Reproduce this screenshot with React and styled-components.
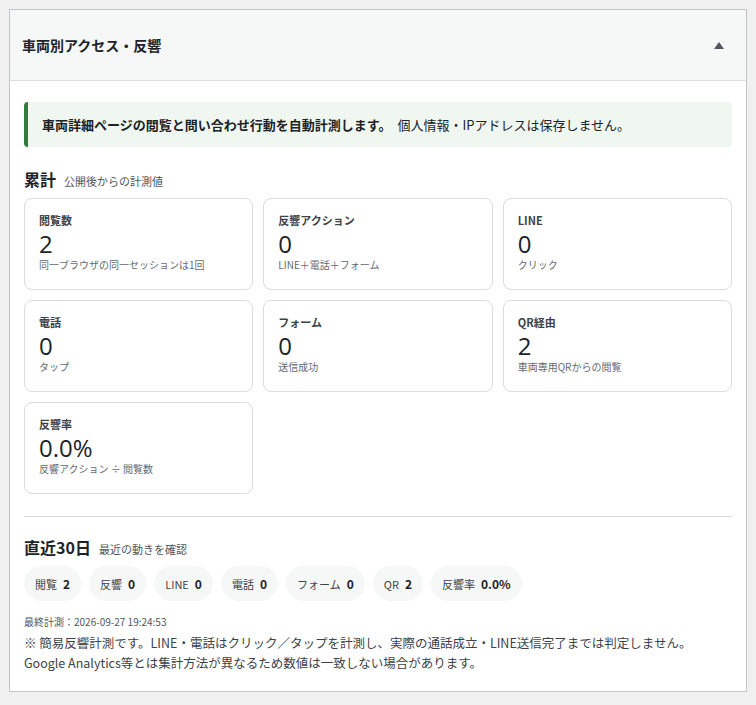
import React from 'react';
import styled, { createGlobalStyle } from 'styled-components';

const Global = createGlobalStyle`
  body {
    margin: 0;
    background: #f0f0f1;
    font-family: "Noto Sans CJK JP", "Noto Sans", sans-serif;
    color: #1d2327;
  }
`;

const Page = styled.div`
  padding: 9px 9px 6px 9px;
`;

const Panel = styled.div`
  background: #fff;
  border: 1px solid #c3c4c7;
`;

const Header = styled.div`
  height: 70px;
  background: #f6f7f7;
  border-bottom: 1px solid #dcdcde;
  display: flex;
  align-items: center;
  justify-content: space-between;
  padding: 0 22px 0 12px;
`;

const Title = styled.h2`
  margin: 0;
  font-size: 14px;
  font-weight: 700;
`;

const Toggle = styled.span`
  width: 0;
  height: 0;
  border-left: 5px solid transparent;
  border-right: 5px solid transparent;
  border-bottom: 7px solid #50575e;
`;

const Body = styled.div`
  padding: 21px 14px 18px 14px;
`;

const Notice = styled.div`
  background: #eff7f0;
  border-left: 4px solid #2f7d3d;
  border-radius: 4px;
  padding: 0 14px;
  height: 45px;
  display: flex;
  align-items: center;
  font-size: 13px;
  strong { font-weight: 700; margin-right: 6px; }
`;

const SectionHead = styled.div`
  display: flex;
  align-items: baseline;
  gap: 8px;
  margin: ${p => p.$top}px 0 7px;
`;

const SectionTitle = styled.span`
  font-size: 16px;
  font-weight: 700;
`;

const SectionSub = styled.span`
  font-size: 11px;
  color: #50575e;
`;

const Grid = styled.div`
  display: grid;
  grid-template-columns: repeat(3, 1fr);
  gap: 10px;
`;

const Card = styled.div`
  border: 1px solid #dcdcde;
  border-radius: 8px;
  height: 92px;
  box-sizing: border-box;
  padding: 13px 14px;
`;

const CardLabel = styled.div`
  font-size: 11px;
  font-weight: 700;
  color: #3c434a;
  line-height: 16px;
`;

const CardValue = styled.div`
  font-family: "Open Sans", "Noto Sans", sans-serif;
  font-size: 24px;
  line-height: 28px;
  margin-top: 2px;
`;

const CardHint = styled.div`
  font-size: 10px;
  color: #646970;
  line-height: 14px;
`;

const Divider = styled.hr`
  border: 0;
  border-top: 1px solid #dcdcde;
  margin: 22px 0 0;
`;

const Pills = styled.div`
  display: flex;
  gap: 8px;
`;

const Pill = styled.span`
  background: #f6f7f7;
  border-radius: 18px;
  height: 35px;
  padding: 0 11px;
  display: inline-flex;
  align-items: center;
  gap: 6px;
  font-size: 11px;
  color: #3c434a;
  b { font-size: 12px; font-weight: 700; color: #1d2327; }
`;

const Meta = styled.div`
  font-size: 10px;
  color: #50575e;
  margin-top: 13px;
`;

const Note = styled.p`
  font-size: 12.5px;
  line-height: 20px;
  color: #3c434a;
  margin: 4px 0 0;
`;

const cards = [
  ['閲覧数', '2', '同一ブラウザの同一セッションは1回'],
  ['反響アクション', '0', 'LINE＋電話＋フォーム'],
  ['LINE', '0', 'クリック'],
  ['電話', '0', 'タップ'],
  ['フォーム', '0', '送信成功'],
  ['QR経由', '2', '車両専用QRからの閲覧'],
  ['反響率', '0.0%', '反響アクション ÷ 閲覧数'],
];

const pills = [
  ['閲覧', '2'], ['反響', '0'], ['LINE', '0'], ['電話', '0'],
  ['フォーム', '0'], ['QR', '2'], ['反響率', '0.0%'],
];

export default function App() {
  return (
    <Page>
      <Global />
      <Panel>
        <Header>
          <Title>車両別アクセス・反響</Title>
          <Toggle />
        </Header>
        <Body>
          <Notice>
            <strong>車両詳細ページの閲覧と問い合わせ行動を自動計測します。</strong>
            個人情報・IPアドレスは保存しません。
          </Notice>
          <SectionHead $top={20}>
            <SectionTitle>累計</SectionTitle>
            <SectionSub>公開後からの計測値</SectionSub>
          </SectionHead>
          <Grid>
            {cards.map(([l, v, h]) => (
              <Card key={l}>
                <CardLabel>{l}</CardLabel>
                <CardValue>{v}</CardValue>
                <CardHint>{h}</CardHint>
              </Card>
            ))}
          </Grid>
          <Divider />
          <SectionHead $top={18}>
            <SectionTitle>直近30日</SectionTitle>
            <SectionSub>最近の動きを確認</SectionSub>
          </SectionHead>
          <Pills>
            {pills.map(([l, v]) => (
              <Pill key={l}>{l}<b>{v}</b></Pill>
            ))}
          </Pills>
          <Meta>最終計測：2026-09-27 19:24:53</Meta>
          <Note>
            ※ 簡易反響計測です。LINE・電話はクリック／タップを計測し、実際の通話成立・LINE送信完了までは判定しません。
            <br />
            Google Analytics等とは集計方法が異なるため数値は一致しない場合があります。
          </Note>
        </Body>
      </Panel>
    </Page>
  );
}
